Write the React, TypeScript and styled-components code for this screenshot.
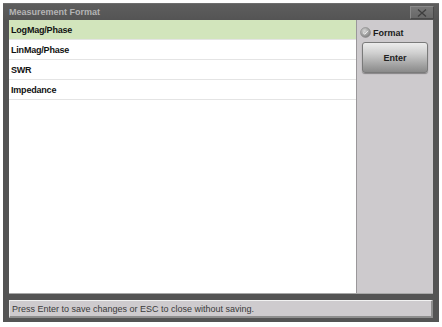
import styled, { createGlobalStyle } from "styled-components";

const GlobalStyle = createGlobalStyle`
  html, body {
    margin: 0;
    padding: 0;
    background: #ffffff;
  }
  body {
    font-family: "Liberation Sans", Arial, sans-serif;
  }
`;

const formats = ["LogMag/Phase", "LinMag/Phase", "SWR", "Impedance"];

export default function App() {
  const selected = 0;
  return (
    <>
      <GlobalStyle />
      <Window>
        <TitleBar>
          <Title>Measurement Format</Title>
          <CloseButton>
            <svg width="10" height="8" viewBox="0 0 10 8">
              <path d="M1 0.5 L9 7.5 M9 0.5 L1 7.5" stroke="#3e3e3e" strokeWidth="1.3" />
            </svg>
          </CloseButton>
        </TitleBar>
        <Body>
          <Main>
            <List>
              {formats.map((f, i) => (
                <Row key={f} $active={i === selected}>
                  {f}
                </Row>
              ))}
            </List>
            <SidePanel>
              <RadioLabel>
                <svg width="11" height="11" viewBox="0 0 11 11">
                  <defs>
                    <radialGradient id="rg" cx="40%" cy="35%" r="70%">
                      <stop offset="0%" stopColor="#d8d8d8" />
                      <stop offset="100%" stopColor="#7a7a7a" />
                    </radialGradient>
                  </defs>
                  <circle cx="5.5" cy="5.5" r="5" fill="url(#rg)" stroke="#8c8c8c" strokeWidth="0.6" />
                  <path d="M3 5.6 L4.8 7.2 L8 3.8" stroke="#f0f0f0" strokeWidth="1" fill="none" />
                </svg>
                Format
              </RadioLabel>
              <EnterButton>Enter</EnterButton>
            </SidePanel>
          </Main>
          <StatusBar>Press Enter to save changes or ESC to close without saving.</StatusBar>
        </Body>
      </Window>
    </>
  );
}

const Window = styled.div`
  margin: 3px 0 0 3px;
  width: 436px;
  height: 319px;
  background: #545454;
  border-top: 1px solid #6e6e6e;
  box-sizing: border-box;
  display: flex;
  flex-direction: column;
`;

const TitleBar = styled.div`
  height: 16px;
  display: flex;
  align-items: center;
  justify-content: space-between;
  padding: 0 5px 0 6px;
  background: linear-gradient(#5e5e5e, #545454);
`;

const Title = styled.div`
  color: #b4b4b4;
  font-size: 9px;
  font-weight: bold;
`;

const CloseButton = styled.div`
  width: 24px;
  height: 13px;
  box-sizing: border-box;
  margin-top: 1px;
  display: flex;
  align-items: center;
  justify-content: center;
  background: linear-gradient(#777777, #686868);
  border: 1px solid #8a8a8a;
  border-right-color: #4a4a4a;
  border-bottom-color: #4a4a4a;
`;

const Body = styled.div`
  flex: 1;
  display: flex;
  flex-direction: column;
  padding: 0 6px 4px 6px;
  gap: 6px;
`;

const Main = styled.div`
  flex: 1;
  display: flex;
  border-bottom: 1px solid #a8a8a8;
`;

const List = styled.div`
  flex: 1;
  background: #ffffff;
  display: flex;
  flex-direction: column;
`;

const Row = styled.div<{ $active?: boolean }>`
  height: 20px;
  box-sizing: border-box;
  display: flex;
  align-items: center;
  padding-left: 2px;
  font-size: 9px;
  font-weight: bold;
  color: #111111;
  letter-spacing: -0.2px;
  background: ${(p) => (p.$active ? "#d2e5bc" : "#ffffff")};
  border-bottom: 1px solid #e4e4e4;
`;

const SidePanel = styled.div`
  width: 77px;
  background: #cdcacd;
  border-left: 1px solid #9a979a;
  box-sizing: border-box;
  display: flex;
  flex-direction: column;
  padding: 7px 5px 0 3px;
`;

const RadioLabel = styled.div`
  display: flex;
  align-items: center;
  gap: 2px;
  font-size: 9px;
  font-weight: bold;
  color: #1a1a1a;
  height: 11px;
`;

const EnterButton = styled.div`
  margin: 4px 0 0 2px;
  height: 31px;
  box-sizing: border-box;
  border: 1px solid #7a7a7a;
  border-radius: 3px;
  background: linear-gradient(#ececec 0%, #cfcfcf 35%, #9e9e9e 80%, #8a8a8a 100%);
  box-shadow: 0 1px 1px rgba(0, 0, 0, 0.35);
  display: flex;
  align-items: center;
  justify-content: center;
  font-size: 9px;
  font-weight: bold;
  color: #222222;
`;

const StatusBar = styled.div`
  height: 18px;
  box-sizing: border-box;
  background: #cecbce;
  border-top: 1px solid #f2f2f2;
  border-left: 1px solid #e6e6e6;
  border-bottom: 2px solid #8e8e8e;
  border-right: 2px solid #8e8e8e;
  display: flex;
  align-items: center;
  padding-left: 2px;
  font-size: 9px;
  color: #3a3a3a;
`;
